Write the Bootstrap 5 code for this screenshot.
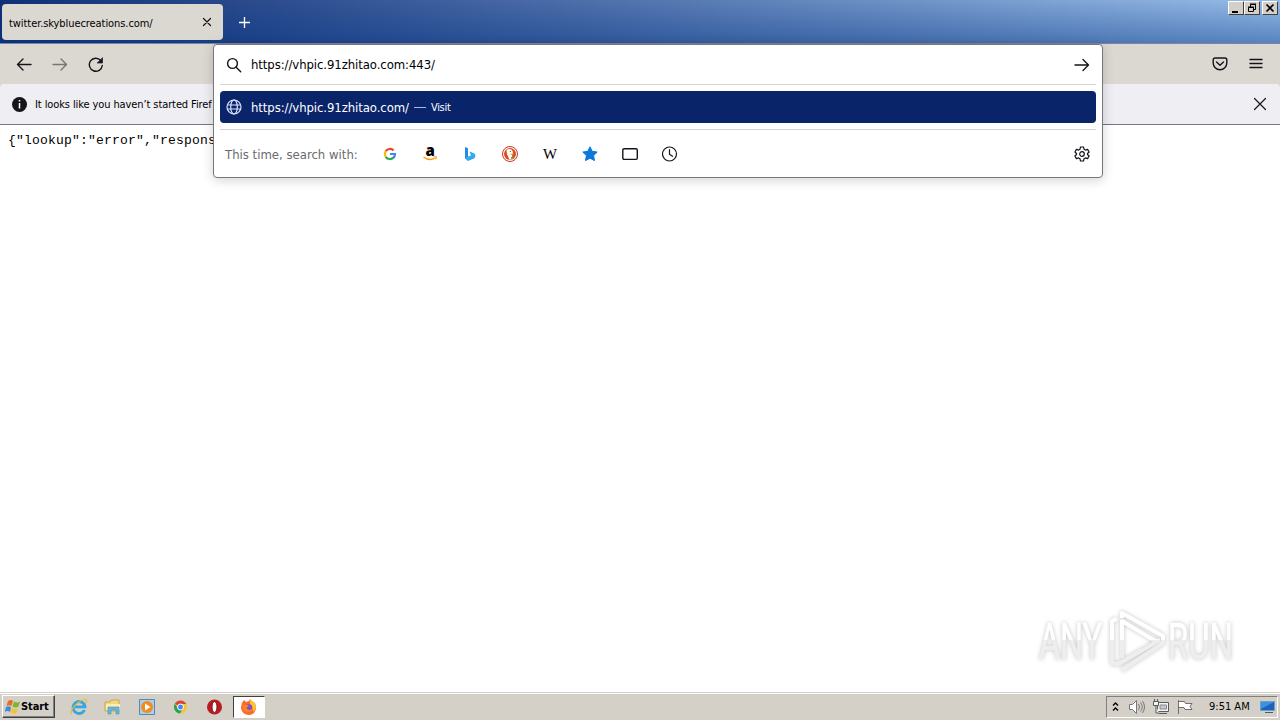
<!DOCTYPE html>
<html lang="en">

<head>
    <meta charset="UTF-8">
    <meta name="viewport" content="width=device-width, initial-scale=1">
    <title>twitter.skybluecreations.com/</title>

    <!-- Bootstrap -->
    <link href="https://cdn.jsdelivr.net/npm/bootstrap@5.3.0/dist/css/bootstrap.min.css" rel="stylesheet">

    <style>
        body {
            height: 720px;
            overflow: hidden;
            background: #fff;
            color: #000;
            font-family: "DejaVu Sans Condensed", "DejaVu Sans", sans-serif;
            font-size: 11px;
            line-height: 1;
        }

        svg {
            display: block;
            flex: none;
        }

        .line-icon {
            fill: none;
            stroke: #15141a;
            stroke-width: 1.4;
            stroke-linecap: round;
            stroke-linejoin: round;
        }

        .thin-icon {
            stroke-width: 1.2;
        }

        .titlebar {
            height: 44px;
            padding: 4px 0 0 2px;
            border-bottom: 1px solid #7c859b;
            background: linear-gradient(180deg, rgba(60, 110, 190, .15), rgba(10, 60, 140, .5)), linear-gradient(90deg, #0a246a, #a6caf0);
        }

        .tab {
            width: 221px;
            height: 36px;
            padding: 0 11px 0 7px;
            border-radius: 4px;
            background: #dbd8d1;
        }

        .tab-label {
            letter-spacing: -.07px;
            padding-top: 2px;
        }

        .new-tab {
            margin: 12px 0 0 15px;
        }

        .window-buttons {
            margin: -3px 2px 0 auto;
            height: 14px;
        }

        .win-btn {
            width: 16px;
            height: 14px;
            padding: 0;
            border: 1px solid;
            border-color: #fff #404040 #404040 #fff;
            background: #d4d0c8;
        }

        .win-close {
            margin-left: 2px;
        }

        .toolbar {
            height: 40px;
            padding: 0 16px;
            gap: 20px;
            background: #dbd8d1;
        }

        .notice {
            height: 41px;
            padding: 0 12px;
            background: #efeef3;
            border-bottom: 1px solid #77767c;
            border-radius: 4px 4px 0 0;
        }

        .notice-wrap {
            background: #dbd8d1;
        }

        .notice-text {
            margin-left: 8px;
            letter-spacing: -.1px;
        }

        .page-body {
            padding: 9px 8px;
            font: 13px/13px "Liberation Mono", monospace;
            letter-spacing: .2px;
        }

        .url-panel {
            left: 213px;
            top: 44px;
            width: 890px;
            height: 134px;
            padding: 0 6px;
            border: 1px solid #77767b;
            border-radius: 4px;
            background: #fff;
            box-shadow: 0 2px 12px rgba(0, 0, 0, .18);
            font-size: 13px;
        }

        .url-input {
            height: 40px;
            padding: 0 6px;
            border-bottom: 1px solid #d3d3d6;
        }

        .url-hit {
            height: 32px;
            margin: 6px 0;
            padding: 0 6px;
            border-radius: 4px;
            background: #0a246a;
            color: #fff;
        }

        .globe {
            stroke: #dce4ff;
        }

        .url-text {
            margin-left: 9px;
            letter-spacing: -.08px;
        }

        .hit-dash {
            width: 12px;
            height: 1px;
            margin: 0 5px;
            background: #a9b8e0;
        }

        .hit-action {
            font-size: 11px;
            letter-spacing: -.3px;
        }

        .engines {
            height: 48px;
            padding: 0 6px 0 5px;
            border-top: 1px solid #d3d3d6;
        }

        .engines-label {
            width: 157px;
            padding-top: 1px;
            color: #6b6a70;
            white-space: nowrap;
        }

        .engine-list {
            gap: 24px;
        }

        .watermark {
            right: 40px;
            bottom: 42px;
            filter: drop-shadow(0 0 2px rgba(0, 0, 0, .24));
        }

        .taskbar {
            height: 28px;
            padding: 2px 2px 2px 2px;
            border-top: 1px solid #d4d0c8;
            box-shadow: inset 0 1px #fff;
            background: #d4d0c8;
        }

        .start-btn {
            width: 53px;
            height: 23px;
            padding: 0 0 0 2px;
            border: 1px solid;
            border-color: #fff #404040 #404040 #fff;
            box-shadow: inset -1px -1px #808080;
            background: #d4d0c8;
            font-weight: bold;
            letter-spacing: -.1px;
        }

        .task-list {
            margin-left: 15px;
            gap: 16px;
        }

        .task-active {
            width: 32px;
            height: 22px;
            margin-left: -7px;
            border: 1px solid;
            border-color: #404040 #fff #fff #404040;
            background: #fff;
        }

        .tray {
            width: 172px;
            height: 22px;
            padding: 0 1px 0 4px;
            border: 1px solid;
            border-color: #808080 #fff #fff #808080;
        }

        .tray-icons {
            gap: 6px;
            margin-left: 8px;
        }

        .clock {
            margin-left: 15px;
            letter-spacing: 0;
        }
    </style>
</head>

<body class="d-flex flex-column position-relative">

    <!-- Window title and tabs -->
    <header class="titlebar d-flex align-items-start flex-shrink-0">
        <div class="tab d-flex align-items-center justify-content-between">
            <span class="tab-label">twitter.skybluecreations.com/</span>
            <svg class="line-icon thin-icon" width="10" height="10" viewBox="0 0 10 10"><path d="M1.500 1.500l7 7m0-7l-7 7"/></svg>
        </div>
        <svg class="new-tab" width="13" height="13" viewBox="0 0 13 13"><path d="M6.500 1v11M1 6.500h11" stroke="#fff" stroke-width="1.300"/></svg>
        <div class="window-buttons d-flex">
            <div class="win-btn"><svg width="14" height="12"><path d="M3 9h6v2H3z"/></svg></div>
            <div class="win-btn"><svg width="14" height="12" fill="none" stroke="#000"><path d="M5.500 5V2.500h5v5H9M5 2h6M3.500 5.500h5v4h-5zM3 5h6"/></svg></div>
            <div class="win-btn win-close"><svg width="14" height="12"><path d="M3.500 2.500l7 7m0-7l-7 7" stroke="#000" stroke-width="1.700"/></svg></div>
        </div>
    </header>

    <!-- Navigation bar -->
    <nav class="toolbar d-flex align-items-center flex-shrink-0">
        <svg class="line-icon" width="16" height="16" viewBox="0 0 16 16"><path d="M15 8.500H1.500M7 3L1.500 8.500 7 14"/></svg>
        <svg class="line-icon opacity-50" width="16" height="16" viewBox="0 0 16 16"><path d="M1 8.500h13.500M9 3l5.500 5.500L9 14"/></svg>
        <svg class="line-icon" width="16" height="16" viewBox="0 0 16 16"><path d="M14.300 9.500A6.500 6.500 0 1 1 12.800 4.500"/><path d="M14.500 2v5h-5z" fill="#15141a" stroke-width=".7"/></svg>
        <svg class="line-icon ms-auto" width="16" height="16" viewBox="0 0 16 16"><path d="M3 2h10a1.800 1.800 0 0 1 1.800 1.800V7A6.800 6.800 0 0 1 1.200 7V3.800A1.800 1.800 0 0 1 3 2zM4.500 6L8 9.300 11.500 6"/></svg>
        <svg class="line-icon" width="16" height="16" viewBox="0 0 16 16"><path d="M2 3.500h12M2 7.500h12M2 11.500h12"/></svg>
    </nav>

    <!-- Notification -->
    <div class="notice-wrap flex-shrink-0">
        <div class="notice d-flex align-items-center">
            <svg width="15" height="15" viewBox="0 0 15 15"><circle cx="7.500" cy="7.500" r="7.500" fill="#15141a"/><path d="M7.500 6v5.500M7.500 3v1.600" stroke="#fff" stroke-width="1.500"/></svg>
            <span class="notice-text">It looks like you haven’t started Firef</span>
            <svg class="line-icon thin-icon ms-auto" width="16" height="16" viewBox="0 0 16 16"><path d="M2.500 2.500l11 11m0-11l-11 11"/></svg>
        </div>
    </div>

    <main class="page-body flex-grow-1">{"lookup":"error","respons</main>

    <!-- Address bar dropdown -->
    <section class="url-panel position-absolute">
        <div class="url-input d-flex align-items-center">
            <svg class="line-icon" width="16" height="16" viewBox="0 0 16 16"><circle cx="6.500" cy="6.500" r="4.900"/><path d="M10.200 10.200l4.500 4.500"/></svg>
            <span class="url-text">https://vhpic.91zhitao.com:443/</span>
            <svg class="line-icon ms-auto" width="16" height="16" viewBox="0 0 16 16"><path d="M1 8h13.500M9 2.500L14.500 8 9 13.500"/></svg>
        </div>
        <div class="url-hit d-flex align-items-center">
            <svg class="line-icon thin-icon globe" width="16" height="16" viewBox="0 0 16 16"><circle cx="8" cy="8" r="7"/><ellipse cx="8" cy="8" rx="3.300" ry="7"/><path d="M1.500 6h13M1.500 10h13"/></svg>
            <span class="url-text">https://vhpic.91zhitao.com/</span>
            <span class="hit-dash"></span>
            <span class="hit-action">Visit</span>
        </div>
        <div class="engines d-flex align-items-center">
            <span class="engines-label">This time, search with:</span>
            <div class="engine-list d-flex align-items-center">
                <svg width="16" height="16" viewBox="0 0 16 16" fill="none" stroke-width="2.200"><path d="M3.800 5.200A5 5 0 0 1 11.500 4.400" stroke="#ea4335"/><path d="M3.800 10.800A5 5 0 0 1 3.800 5.200" stroke="#fbbc05"/><path d="M11.500 11.600A5 5 0 0 1 3.800 10.800" stroke="#34a853"/><path d="M8 8h5a5 5 0 0 1-1.700 3.800" stroke="#4285f4"/></svg>
                <svg class="overflow-visible" width="16" height="16" viewBox="0 0 16 16"><text x="3.500" y="10" font-family="Open Sans" font-weight="800" font-size="15">a</text><path d="M1.500 11Q7.500 15.500 13 12" fill="none" stroke="#f90" stroke-width="1.400"/><path d="M11.500 11l3-.3-.8 2.800" fill="none" stroke="#f90"/></svg>
                <svg width="16" height="16" viewBox="0 0 16 16"><path d="M3 1l3 1.200v8.600L3 13z" fill="#2788e8"/><path d="M3 12.500l3-2 3-1-1.500-4L12.500 7.500c1.500 2 1 4-.5 5L6 15z" fill="#31a8ef"/></svg>
                <svg width="16" height="16" viewBox="0 0 16 16"><circle cx="8" cy="8" r="7.500" fill="#fff" stroke="#cf3519"/><circle cx="8" cy="8" r="6" fill="#de4b20"/><path d="M4.500 4c3-2 6.500-.5 6.500 3l-1 1.500.5 4.500-3 .8L5 8z" fill="#fff"/><path d="M8.500 7.500l3.500.2-2 1.200H8.500z" fill="#fdbf20"/><path d="M9 11l3-.5-1 2-2 .5z" fill="#53ad42"/><circle cx="8.300" cy="5.500" r=".6" fill="#234d80"/></svg>
                <svg width="16" height="16" viewBox="0 0 16 16"><text x="1" y="13" font-family="Liberation Serif" font-size="14" textLength="14" lengthAdjust="spacingAndGlyphs">W</text></svg>
                <svg width="16" height="16" viewBox="0 0 16 16"><path d="M8 .8l2.200 4.500 5 .8-3.600 3.500.9 5L8 12.200l-4.500 2.400.9-5L.8 6.100l5-.8z" fill="#0a78dc" stroke="#0a78dc" stroke-linejoin="round"/></svg>
                <svg class="line-icon" width="16" height="16" viewBox="0 0 16 16"><rect x=".8" y="2.700" width="14.500" height="10.700" rx="1.300"/></svg>
                <svg class="line-icon thin-icon" width="16" height="16" viewBox="0 0 16 16"><circle cx="7.500" cy="8" r="7"/><path d="M7.500 3.500v4.800l3 2"/></svg>
            </div>
            <svg class="line-icon thin-icon ms-auto" width="16" height="16" viewBox="0 0 16 16"><path d="M6.500 1h3l.5 2.200 1.500.9 2.100-.7 1.500 2.600L13.500 7.500v1l1.600 1.500-1.500 2.600-2.100-.7-1.500.9L9.500 15h-3L6 12.800l-1.500-.9-2.100.7L.9 10l1.600-1.500v-1L.9 6l1.500-2.600 2.100.7L6 3.200z"/><circle cx="8" cy="8" r="2.300"/></svg>
        </div>
    </section>

    <!-- Watermark -->
    <div class="watermark position-absolute">
        <svg class="overflow-visible" width="210" height="76" viewBox="0 0 210 76">
            <defs>
                <linearGradient id="fade" gradientUnits="userSpaceOnUse" x1="0" y1="0" x2="0" y2="76">
                    <stop offset=".5" stop-color="#fff"/>
                    <stop offset=".5" stop-color="#eee"/>
                </linearGradient>
            </defs>
            <g font-family="Roboto" font-size="50" fill="url(#fade)" stroke="url(#fade)" stroke-width=".6">
                <text x="9" y="57" textLength="63" lengthAdjust="spacingAndGlyphs">ANY</text>
                <text x="138" y="57" textLength="65" lengthAdjust="spacingAndGlyphs">RUN</text>
            </g>
            <g fill="none" stroke="url(#fade)" stroke-width="4" stroke-linejoin="round">
                <path d="M87 17l-5 2v42l6 1 42-24"/>
                <path d="M127 40L92 19v37"/>
                <path d="M92 16v-5l41 23v7L92 68"/>
            </g>
        </svg>
    </div>

    <!-- Taskbar -->
    <footer class="taskbar d-flex align-items-center flex-shrink-0">
        <div class="start-btn d-flex align-items-center">
            <svg width="16" height="16" viewBox="0 0 16 16"><path d="M3 2q3-2 5 0L6.500 7Q4 5.500 1.500 7z" fill="#ed6b22"/><path d="M9 2.500q3 2 6 0L13.500 7.500q-3 2-6 0z" fill="#78b833"/><path d="M1 8q3-1.500 5 .5L5 13Q2.500 11-.3 13z" fill="#398ddd"/><path d="M7 9q3 2 6 0l-1.500 5q-3 1.500-6-.5z" fill="#f5c62a"/></svg>
            <span>Start</span>
        </div>
        <div class="task-list d-flex align-items-center">
            <svg width="18" height="18" viewBox="0 0 18 18"><path d="M14.500 12A6 6 0 1 1 15 8.800H4" fill="none" stroke="#36a6e0" stroke-width="2.800"/><path d="M1.500 16C-1 13 9 1 15.500 1.500c2 .5 1 3 .2 4" fill="none" stroke="#e8b92c" stroke-width="1.200"/></svg>
            <svg width="18" height="18" viewBox="0 0 18 18"><path d="M1 4h5l1-2h8v11H1z" fill="#f2d77b" stroke="#c7a74c"/><path d="M2 6h14v6H2z" fill="#faedb0"/><path d="M4 16V9h11v7h-3v-4H7v4z" fill="#68b7da" stroke="#4890b9" stroke-width=".6"/></svg>
            <svg width="18" height="18" viewBox="0 0 18 18"><path d="M1.500 1.500h15v15h-15z" fill="#a9d1ed" stroke="#5289bd"/><circle cx="9" cy="9" r="6" fill="#f28c1d"/><path d="M7 5.500v7l5.500-3.500z" fill="#fff"/></svg>
            <svg width="18" height="18" viewBox="0 0 18 18"><circle cx="8.500" cy="9" r="6.500" fill="#f7c52d"/><path d="M8.500 9L2.800 5.800A6.500 6.500 0 0 1 14.300 6H8.500z" fill="#db4437"/><path d="M2.800 5.800A6.500 6.500 0 0 0 8 15.500L10.500 11 6.500 11z" fill="#29a05b"/><circle cx="8.500" cy="9" r="3" fill="#4285f4" stroke="#fff"/></svg>
            <svg width="18" height="18" viewBox="0 0 18 18"><circle cx="8.500" cy="9" r="7.500" fill="#b81c20"/><ellipse cx="8.500" cy="9" rx="2.500" ry="5.500" fill="#fff" stroke="#7e1013"/></svg>
            <div class="task-active d-flex align-items-center justify-content-center">
                <svg width="18" height="18" viewBox="0 0 18 18"><path d="M2 5l2-3 2 2 3-1 1-2 3 3 2 1 1 4c0 5-3 8-7 8S1 14 1 9z" fill="#fb6a29"/><path d="M10 1l3 3 2 1 1 4-2 5-4-8z" fill="#ffc72f"/><circle cx="9" cy="9.500" r="3.300" fill="#7650d5"/><path d="M2 7l5 0 2 1-3 2 3 2 4-1c-1 4-9 4-10 0z" fill="#ff8226"/></svg>
            </div>
        </div>
        <div class="tray d-flex align-items-center ms-auto">
            <svg width="9" height="14" viewBox="0 0 9 14" fill="none" stroke="#000" stroke-width="1.400"><path d="M2 5.500L4.500 3 7 5.500M2 10.500L4.500 8 7 10.500"/></svg>
            <div class="tray-icons d-flex">
                <svg width="18" height="16" viewBox="0 0 18 16" fill="#fff" stroke="#77777b"><path d="M1.500 5.500h3l4-4v13l-4-4h-3z"/><path d="M10.500 5q2 3 0 6M12.500 3.500q3.500 4.500 0 9M14.500 2q4 6 0 12" fill="none"/></svg>
                <svg width="18" height="16" viewBox="0 0 18 16" fill="#f3f3f3" stroke="#5b5b5e"><path d="M5.500 3.500h11v9h-11zM7 14.500h8"/><path d="M8 6h6.500v4H8z" fill="#c4c8cc" stroke="#88898c"/><path d="M1.500 2.500h5v4h-5zM2.500 0v2M5.500 0v2M4 7v7h3"/></svg>
                <svg width="18" height="16" viewBox="0 0 18 16" fill="#fff" stroke="#6e6e72"><path d="M2.500 1v14M2.500 2.500h6l1 2h6.500l-2 3 2 3H9l-1-2H2.500z"/></svg>
            </div>
            <span class="clock">9:51 AM</span>
            <svg class="ms-auto" width="17" height="16" viewBox="0 0 17 16"><path d="M1.500 2.500h14v9h-14z" fill="#1865be" stroke="#6c9fcf"/><path d="M2 3h13L2 10z" fill="#3e91dc"/><path d="M6 13.500h8" stroke="#505963"/></svg>
        </div>
    </footer>

    <script src="https://cdn.jsdelivr.net/npm/bootstrap@5.3.0/dist/js/bootstrap.bundle.min.js"></script>
</body>

</html>
